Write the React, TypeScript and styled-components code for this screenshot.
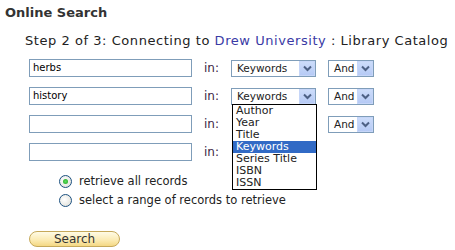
import React from 'react'
import styled, { createGlobalStyle } from 'styled-components'

const GlobalStyle = createGlobalStyle`
  html, body {
    margin: 0;
    padding: 0;
    background: #fff;
    font-family: "DejaVu Sans", Verdana, sans-serif;
  }
`

const Page = styled.div`
  width: 455px;
  height: 250px;
  padding: 5px 0 0 5px;
  box-sizing: border-box;
  color: #333;
`

const Title = styled.h1`
  margin: 0;
  font-size: 13px;
  font-weight: bold;
  line-height: 16px;
  color: #333;
`

const Step = styled.div`
  margin: 12px 0 0 20px;
  font-size: 13px;
  letter-spacing: 0.55px;
  line-height: 16px;
  color: #222;
`

const Link = styled.span`
  color: #3a3aa5;
`

const Rows = styled.div`
  display: flex;
  flex-direction: column;
  gap: 10px;
  margin: 10px 0 0 24px;
`

const Row = styled.div`
  display: flex;
  align-items: center;
  height: 18px;
`

const TextInput = styled.div`
  width: 163px;
  height: 18px;
  box-sizing: border-box;
  border: 1px solid #7f9db9;
  padding: 0 3px;
  font-size: 10px;
  line-height: 16px;
  color: #000;
`

const InLabel = styled.div`
  width: 27px;
  margin-left: 12px;
  font-size: 12px;
  color: #3d1f45;
`

const SelectBox = styled.div<{ $w: number; $gap?: number }>`
  position: relative;
  width: ${p => p.$w}px;
  height: 17px;
  margin-left: ${p => p.$gap ?? 0}px;
  box-sizing: border-box;
  border: 1px solid #7f9db9;
  display: flex;
  align-items: center;
  justify-content: space-between;
  padding: 0 0 0 5px;
  font-size: 10.5px;
  color: #222;
  background: #fff;
`

const Arrow = styled.div`
  width: 16px;
  height: 15px;
  background: linear-gradient(#ccdcfa, #b6caf5);
  display: flex;
  align-items: center;
  justify-content: center;
  box-sizing: border-box;
  border: 1px solid #c6d6f8;
`

const Spacer = styled.div<{ $w: number }>`
  width: ${p => p.$w}px;
`

const List = styled.div`
  position: absolute;
  top: 15px;
  left: 0;
  width: 85px;
  box-sizing: border-box;
  border: 1px solid #000;
  background: #fff;
  z-index: 2;
`

const Option = styled.div<{ $on?: boolean }>`
  height: 12px;
  line-height: 12px;
  padding-left: 3px;
  font-size: 11px;
  color: ${p => (p.$on ? '#fff' : '#222')};
  background: ${p => (p.$on ? '#316ac5' : '#fff')};
`

const Radios = styled.div`
  display: flex;
  flex-direction: column;
  gap: 6px;
  margin: 14px 0 0 54px;
`

const RadioRow = styled.label`
  display: flex;
  align-items: center;
  gap: 7px;
  font-size: 11.5px;
  line-height: 13px;
  color: #222;
`

const Radio = styled.span<{ $on?: boolean }>`
  width: 13px;
  height: 13px;
  box-sizing: border-box;
  border-radius: 50%;
  border: 1px solid #1c5180;
  background: radial-gradient(circle at 40% 40%, #fff, #dcdcd4);
  display: flex;
  align-items: center;
  justify-content: center;
  &::after {
    content: '';
    width: 5px;
    height: 5px;
    border-radius: 50%;
    background: ${p => (p.$on ? 'radial-gradient(circle, #5ce05c, #21a121)' : 'transparent')};
  }
`

const SearchButton = styled.button`
  display: block;
  margin: 24px 0 0 24px;
  width: 91px;
  height: 16px;
  border: 1px solid #c6a95a;
  border-radius: 8px;
  background: linear-gradient(#fffbe6, #fbeab0 60%, #f4d884);
  font-family: "DejaVu Sans", Verdana, sans-serif;
  font-size: 12px;
  line-height: 14px;
  padding: 0;
  color: #333;
`

const Chevron = () => (
  <svg width="9" height="7" viewBox="0 0 9 7">
    <path d="M1 1.5 L4.5 5 L8 1.5" fill="none" stroke="#4d6185" strokeWidth="2" />
  </svg>
)

const fields = ['Author', 'Year', 'Title', 'Keywords', 'Series Title', 'ISBN', 'ISSN']

const rows = [
  { text: 'herbs', field: true, bool: true, open: false },
  { text: 'history', field: true, bool: true, open: true },
  { text: '', field: false, bool: true, open: false },
  { text: '', field: false, bool: false, open: false },
]

export default function App() {
  return (
    <Page>
      <GlobalStyle />
      <Title>Online Search</Title>
      <Step>
        Step 2 of 3: Connecting to <Link>Drew University</Link> : Library Catalog
      </Step>
      <Rows>
        {rows.map((r, i) => (
          <Row key={i}>
            <TextInput>{r.text}</TextInput>
            <InLabel>in:</InLabel>
            {r.field ? (
              <SelectBox $w={85}>
                Keywords
                <Arrow><Chevron /></Arrow>
                {r.open && (
                  <List>
                    {fields.map(f => (
                      <Option key={f} $on={f === 'Keywords'}>{f}</Option>
                    ))}
                  </List>
                )}
              </SelectBox>
            ) : (
              <Spacer $w={85} />
            )}
            {r.bool && (
              <SelectBox $w={46} $gap={12}>
                And
                <Arrow><Chevron /></Arrow>
              </SelectBox>
            )}
          </Row>
        ))}
      </Rows>
      <Radios>
        <RadioRow><Radio $on />retrieve all records</RadioRow>
        <RadioRow><Radio />select a range of records to retrieve</RadioRow>
      </Radios>
      <SearchButton>Search</SearchButton>
    </Page>
  )
}
